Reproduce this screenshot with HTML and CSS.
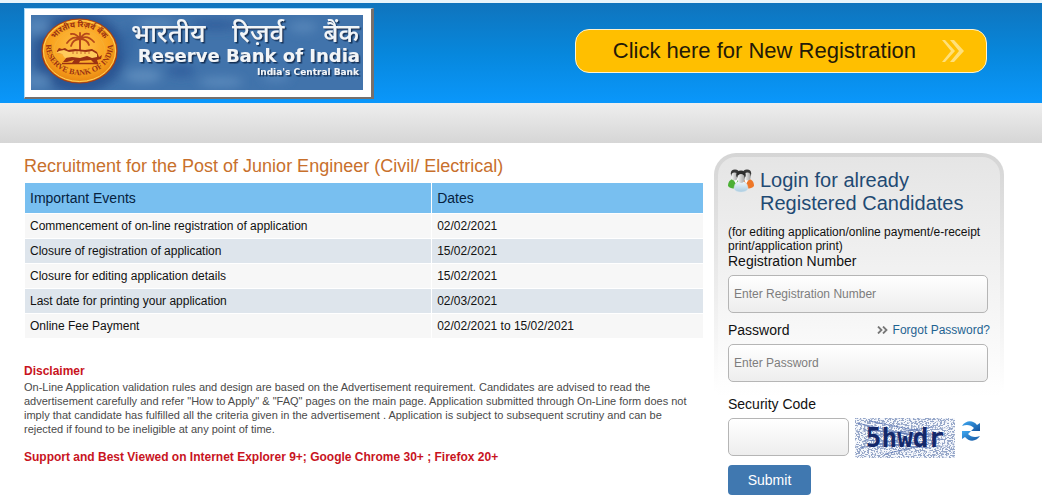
FILE: index.html
```html
<!DOCTYPE html>
<html lang="en">
<head>
  <meta charset="UTF-8">
  <meta name="viewport" content="width=device-width, initial-scale=1.0">
  <title>Reserve Bank of India - Online Registration</title>
  <link rel="stylesheet" href="styles.css">
</head>
<body>
  <!-- Header -->
  <header class="header">
    <a href="#" class="logo">
      <svg class="logo-img" viewBox="0 0 332 75">
        <defs>
          <filter id="soft" x="-50%" y="-50%" width="200%" height="200%"><feGaussianBlur stdDeviation="5"/></filter>
          <filter id="shade"><feDropShadow dx="1.5" dy="1.5" stdDeviation="0.6" flood-color="#10284e" flood-opacity="0.9"/></filter>
          <radialGradient id="gold" cx="50%" cy="42%" r="58%">
            <stop offset="0" stop-color="#ffc24a"/>
            <stop offset="0.7" stop-color="#f9a11c"/>
            <stop offset="1" stop-color="#e58311"/>
          </radialGradient>
          <path id="arc-top" d="M20 36 A28.500 24 0 0 1 77 36"/>
          <path id="arc-bottom" d="M16 24 A33.500 29 0 1 0 81 24"/>
        </defs>
        <rect width="332" height="75" fill="#4173ab"/>
        <!-- clouds -->
        <g filter="url(#soft)">
          <ellipse cx="48" cy="38" rx="46" ry="40" fill="#2c5592"/>
          <ellipse cx="7" cy="12" rx="12" ry="8" fill="#5585b9"/>
          <ellipse cx="6" cy="66" rx="14" ry="7" fill="#5585b9"/>
          <ellipse cx="125" cy="8" rx="20" ry="4" fill="#5a89bb"/>
          <ellipse cx="185" cy="10" rx="24" ry="5" fill="#315f9c"/>
          <ellipse cx="112" cy="61" rx="18" ry="7" fill="#5c8abc"/>
          <ellipse cx="150" cy="56" rx="14" ry="6" fill="#33619f"/>
          <ellipse cx="190" cy="67" rx="22" ry="5" fill="#5a89bc"/>
          <ellipse cx="245" cy="62" rx="14" ry="5" fill="#5383b8"/>
          <ellipse cx="272" cy="12" rx="14" ry="6" fill="#5484b8"/>
          <ellipse cx="98" cy="28" rx="7" ry="18" fill="#386aa5"/>
        </g>
        <!-- seal -->
        <ellipse cx="48.500" cy="36" rx="37.500" ry="32" fill="url(#gold)" stroke="#a83d12" stroke-width="1.200"/>
        <ellipse cx="48.500" cy="36" rx="36" ry="30.500" fill="none" stroke="#ffd25c" stroke-width="1"/>
        <ellipse cx="48.500" cy="36" rx="25.500" ry="21" fill="none" stroke="#f1b33c" stroke-width="0.600"/>
        <text class="seal-hindi"><textPath href="#arc-top" startOffset="50%" text-anchor="middle">भारतीय रिज़र्व बैंक</textPath></text>
        <text class="seal-text"><textPath href="#arc-bottom" startOffset="50%" text-anchor="middle">RESERVE BANK OF INDIA</textPath></text>
        <g fill="none" stroke="#b5481a" stroke-linecap="round">
          <path stroke-width="2" d="M49 36 V24"/>
          <path stroke-width="1.800" d="M49 24 Q42 20 36 28 M49 24 Q42 24 40 31 M49 24 Q56 19 63 27 M49 24 Q56 24 58 30 M49 24 Q45 18 40 19 M49 24 Q53 17 58 19 M49 24 V18"/>
        </g>
        <!-- tiger -->
        <path fill="#9c3212" d="M26 36l2-3 3 1 3-1 3 2 7-1 10 1 7-1 5 3 2 5 3-2-1 4-4 1 1 3h-4l-3-3-11 1-1 2h-7l2-3-7 2h-4l4-5-5-3-5-1z"/>
        <path fill="#ffcb5c" d="M28 36l5-1 5 2 8-1 9 1 6-1 5 3v3l-5 1-5-2-7 2-8-1-7 1-3-4-6-1z"/>
        <path fill="none" stroke="#b5481a" stroke-width="0.700" d="M42 36v3M46 36v3M50 36v3M54 36v3M58 36v3"/>
        <path stroke="#9c3212" stroke-width="1.600" d="M31 48.500H67"/>
        <!-- bank name -->
        <g fill="#f2f5f8" filter="url(#shade)">
          <text class="name-hindi" x="100" y="27">भारतीय</text>
          <text class="name-hindi" x="201" y="27">रिज़र्व</text>
          <text class="name-hindi" x="328" y="27" text-anchor="end">बैंक</text>
          <text class="name-english" x="329" y="47" text-anchor="end">Reserve Bank of India</text>
          <text class="name-tagline" x="328" y="60" text-anchor="end">India's Central Bank</text>
        </g>
      </svg>
    </a>
    <a href="#" class="new-registration">
      <span>Click here for New Registration</span>
      <svg class="arrows" viewBox="0 0 22 22" fill="#ffe07a">
        <path d="M0 0h3l10 11-10 11h-3l9-11z"/>
        <path d="M8 0h4l10 11-10 11h-4l9-11z"/>
      </svg>
    </a>
  </header>
  <div class="sub-bar"></div>

  <main class="content">
    <!-- Important dates -->
    <section class="details">
      <h1>Recruitment for the Post of Junior Engineer (Civil/ Electrical)</h1>
      <table class="events">
        <thead>
          <tr><th>Important Events</th><th>Dates</th></tr>
        </thead>
        <tbody>
          <tr><td>Commencement of on-line registration of application</td><td>02/02/2021</td></tr>
          <tr><td>Closure of registration of application</td><td>15/02/2021</td></tr>
          <tr><td>Closure for editing application details</td><td>15/02/2021</td></tr>
          <tr><td>Last date for printing your application</td><td>02/03/2021</td></tr>
          <tr><td>Online Fee Payment</td><td>02/02/2021 to 15/02/2021</td></tr>
        </tbody>
      </table>
      <h2 class="notice">Disclaimer</h2>
      <p class="disclaimer">On-Line Application validation rules and design are based on the Advertisement requirement. Candidates are advised to read the advertisement carefully and refer "How to Apply" &amp; "FAQ" pages on the main page. Application submitted through On-Line form does not imply that candidate has fulfilled all the criteria given in the advertisement . Application is subject to subsequent scrutiny and can be rejected if found to be ineligible at any point of time.</p>
      <p class="notice">Support and Best Viewed on Internet Explorer 9+; Google Chrome 30+ ; Firefox 20+</p>
    </section>

    <!-- Login form -->
    <aside class="login">
      <form class="login-form">
        <div class="login-title">
          <svg class="users" viewBox="0 0 26 24">
            <defs>
              <linearGradient id="face" x1="0" x2="1"><stop offset="0" stop-color="#fafafa"/><stop offset="1" stop-color="#a0a0a0"/></linearGradient>
              <linearGradient id="body" x1="0" y1="0" x2="0" y2="1"><stop offset="0" stop-color="#f5fafd"/><stop offset="1" stop-color="#a9cbe0"/></linearGradient>
            </defs>
            <path fill="#4bb035" d="M0 17c0-4 2-7 6-7s7 3 6 9c-4 1-10 1-12-2z"/>
            <path fill="#ee7728" d="M26 17c0-4-2-7-6-7s-7 3-6 9c4 1 10 1 12-2z"/>
            <path fill="#fff" d="M5 10l3 5 2-5zM21 10l-3 5-2-5z"/>
            <ellipse cx="7" cy="4.500" rx="4.200" ry="4" fill="#383838"/>
            <ellipse cx="19" cy="4.500" rx="4.200" ry="4" fill="#383838"/>
            <ellipse cx="6.500" cy="7.500" rx="3.200" ry="4" fill="url(#face)"/>
            <ellipse cx="19.500" cy="7.500" rx="3.200" ry="4" fill="url(#face)"/>
            <path fill="url(#body)" stroke="#d5e4ed" stroke-width="0.500" d="M6 20c0-5 3-8 7-8s7 3 7 8c-2 4-12 4-14 0z"/>
            <ellipse cx="13" cy="6" rx="4.800" ry="4.500" fill="#2c2c2c"/>
            <ellipse cx="13" cy="9.500" rx="3.800" ry="4.500" fill="url(#face)"/>
          </svg>
          <h2>Login for already Registered Candidates</h2>
        </div>
        <p class="hint">(for editing application/online payment/e-receipt print/application print)</p>

        <div class="field">
          <label for="reg-no">Registration Number</label>
          <input type="text" id="reg-no" placeholder="Enter Registration Number">
        </div>

        <div class="field">
          <div class="label-row">
            <label for="password">Password</label>
            <a href="#" class="forgot">
              <svg class="forgot-arrows" viewBox="0 0 11 8" fill="none" stroke="#777" stroke-width="1.800">
                <path d="M1 0.500L4.500 4L1 7.500M6 0.500L9.500 4L6 7.500"/>
              </svg>
              <span>Forgot Password?</span>
            </a>
          </div>
          <input type="password" id="password" placeholder="Enter Password">
        </div>

        <div class="field security">
          <label for="captcha">Security Code</label>
          <div class="captcha-row">
            <input type="text" id="captcha">
            <svg class="captcha" viewBox="0 0 100 40">
              <defs>
                <filter id="grain" x="0" y="0" width="100%" height="100%">
                  <feTurbulence type="fractalNoise" baseFrequency="0.550 0.800" numOctaves="2" seed="8"/>
                  <feColorMatrix values="0 0 0 0 0.300  0 0 0 0 0.380  0 0 0 0 0.580  10 0 0 0 -4.700"/>
                </filter>
              </defs>
              <rect width="100" height="40" fill="#f6f8fc"/>
              <rect width="100" height="40" filter="url(#grain)"/>
              <g fill="none" stroke="#5c76b4" stroke-width="0.800">
                <path d="M2 5L68 20M8 12L80 17M14 3L64 13M10 22L70 26M5 30L66 17M22 29L88 21M16 18L78 9M30 36L82 24M12 8L58 25M24 26L76 30M28 13L84 20"/>
              </g>
              <text x="50" y="29" text-anchor="middle">5hwdr</text>
            </svg>
            <button type="button" class="refresh" aria-label="Refresh security code">
              <svg viewBox="0 0 20 20">
                <defs>
                  <linearGradient id="blue" x1="0" y1="0" x2="1" y2="1"><stop offset="0" stop-color="#3fa9f2"/><stop offset="1" stop-color="#14549f"/></linearGradient>
                </defs>
                <path fill="url(#blue)" d="M1 5C5-1 12-1 16 4L19 2V10H10L13 7C10 4 6 3 1 5z"/>
                <path fill="url(#blue)" d="M19 15C15 21 8 21 4 16L1 18V10H10L7 13C10 16 14 17 19 15z"/>
              </svg>
            </button>
          </div>
        </div>

        <button type="submit" class="submit">Submit</button>
      </form>
    </aside>
  </main>
</body>
</html>
```
FILE: styles.css
```css
* {
  margin: 0;
  padding: 0;
  box-sizing: border-box;
}

body {
  font-family: "Liberation Sans", Arial, sans-serif;
  font-size: 12px;
  color: #111;
  background: #fff;
}

a {
  text-decoration: none;
}

svg {
  display: block;
}

/* Header */
.header {
  display: flex;
  justify-content: space-between;
  align-items: flex-start;
  padding: 5px 55px 4px 24px;
  border-top: 3px solid #e9f5fb;
  background: linear-gradient(#0f74bd, #0787dc 50%, #0a97fb);
}

.logo {
  padding: 6px 8px 7px 6px;
  border: 1px solid #a9daf8;
  border-right: 3px solid #77706c;
  border-bottom: 2px solid #77706c;
  background: #fff;
}

.logo-img {
  width: 332px;
  height: 75px;
}

.name-hindi {
  font: 500 26px "Noto Sans", "Noto Sans Devanagari", sans-serif;
}

.name-english {
  font: bold 18px "DejaVu Sans", sans-serif;
}

.name-tagline {
  font: bold 9px "DejaVu Sans", sans-serif;
}

.seal-hindi {
  font: bold 8px "Noto Sans", sans-serif;
  fill: #9c3212;
}

.seal-text {
  font: bold 8px "Liberation Serif", serif;
  fill: #9c3212;
}

.new-registration {
  display: flex;
  align-items: center;
  gap: 26px;
  height: 44px;
  margin-top: 21px;
  padding: 0 22px 0 37px;
  border: 1px solid #fff3cf;
  border-radius: 14px;
  background: #ffbf00;
  color: #241a08;
  font-size: 22px;
}

.arrows {
  width: 22px;
  height: 22px;
}

.sub-bar {
  height: 40px;
  background: linear-gradient(#eee, #d6d6d6);
}

/* Page columns */
.content {
  display: grid;
  grid-template-columns: 1fr 290px;
  gap: 10px;
  padding: 10px 38px 0 24px;
}

.details h1 {
  margin-top: 2px;
  font-size: 18px;
  font-weight: normal;
  line-height: 22px;
  color: #c8702c;
}

/* Dates table */
.events {
  width: 100%;
  margin-top: 5px;
  border-spacing: 1px;
  table-layout: fixed;
}

.events th,
.events td {
  height: 24px;
  padding: 0 5px;
  background: #f7f7f7;
  text-align: left;
}

.events th {
  height: 30px;
  background: #78bff0;
  color: #06223f;
  font-size: 14px;
  font-weight: normal;
}

.events th:first-child {
  width: 60%;
}

.events tr:nth-child(even) td {
  background: #dee5ec;
}

.notice {
  font-size: 12px;
  font-weight: bold;
  line-height: 16px;
  color: #c8141e;
}

h2.notice {
  margin-top: 24px;
}

.disclaimer {
  margin: 1px 0 13px;
  padding-right: 10px;
  font-size: 11px;
  line-height: 14px;
  color: #4a4a4a;
}

/* Login panel */
.login {
  padding: 4px 4px 0;
  border-radius: 22px 22px 0 0;
  background: linear-gradient(#d5d5d5, #fff 240px);
}

.login-form {
  padding: 12px 10px 7px;
  border-radius: 18px 18px 0 0;
  background: linear-gradient(#e5e5e5, #fff 240px);
}

.login-title {
  display: flex;
  gap: 6px;
}

.login-title h2 {
  flex: 1;
  font-size: 20px;
  font-weight: normal;
  line-height: 23px;
  color: #1f4a73;
}

.users {
  width: 26px;
  height: 24px;
}

.hint {
  margin-top: 10px;
  line-height: 14px;
}

.field {
  margin-bottom: 9px;
}

.field label {
  display: block;
  font-size: 14px;
  line-height: 16px;
}

.field input {
  display: block;
  width: calc(100% - 2px);
  height: 38px;
  margin-top: 6px;
  padding: 0 5px;
  border: 1px solid #b5b5b5;
  border-radius: 5px;
  background: linear-gradient(#fff, #ededed);
  font-family: inherit;
  font-size: 12px;
}

.field input::placeholder {
  color: #7d7d7d;
}

.label-row {
  display: flex;
  justify-content: space-between;
}

.forgot {
  display: flex;
  align-items: center;
  gap: 5px;
  line-height: 14px;
  color: #1f6391;
}

.forgot-arrows {
  width: 11px;
  height: 8px;
}

.security {
  margin-top: 14px;
}

.captcha-row {
  display: flex;
  align-items: flex-start;
  gap: 6px;
}

.captcha-row input {
  width: 121px;
}

.captcha {
  width: 100px;
  height: 40px;
  margin: 6px 0 -2px;
}

.captcha text {
  font: bold 26px "DejaVu Sans Mono", monospace;
  fill: #14286a;
}

.refresh {
  width: 20px;
  height: 20px;
  margin-top: 9px;
  border: 0;
  background: none;
  cursor: pointer;
}

.submit {
  width: 83px;
  height: 30px;
  border: 0;
  border-radius: 4px;
  background: #4078b0;
  color: #fff;
  font-family: inherit;
  font-size: 14px;
  cursor: pointer;
}
```
